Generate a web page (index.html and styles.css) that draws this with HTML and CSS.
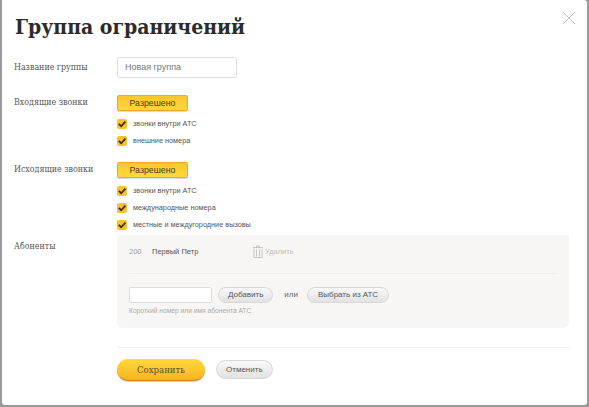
FILE: index.html
```html
<!DOCTYPE html>
<html lang="ru">
<head>
<meta charset="utf-8">
<title>Группа ограничений</title>
<link rel="stylesheet" href="styles.css">
</head>
<body>
<div class="modal">
  <svg class="close" width="14" height="14" viewBox="0 0 14 14"><path d="M1 1L13 13M13 1L1 13" stroke="#c4c4c4" stroke-width="1" fill="none"/></svg>
  <h1 class="title">Группа ограничений</h1>
  <div class="row name-row">
    <div class="label">Название группы</div>
    <div class="control"><input class="name-input" type="text" value="Новая группа"></div>
  </div>
  <div class="row calls-row">
    <div class="label">Входящие звонки</div>
    <div class="control">
      <div class="toggle">Разрешено</div>
      <div class="checks">
        <div class="check"><svg class="box" width="10" height="10" viewBox="0 0 10 10"><path d="M1.8 4.8L4.2 7.2L8.4 2.6" stroke="#3a2a08" stroke-width="1.7" fill="none"/></svg>звонки внутри АТС</div>
        <div class="check"><svg class="box" width="10" height="10" viewBox="0 0 10 10"><path d="M1.8 4.8L4.2 7.2L8.4 2.6" stroke="#3a2a08" stroke-width="1.7" fill="none"/></svg>внешние номера</div>
      </div>
    </div>
  </div>
  <div class="row calls-row out-row">
    <div class="label">Исходящие звонки</div>
    <div class="control">
      <div class="toggle">Разрешено</div>
      <div class="checks">
        <div class="check"><svg class="box" width="10" height="10" viewBox="0 0 10 10"><path d="M1.8 4.8L4.2 7.2L8.4 2.6" stroke="#3a2a08" stroke-width="1.7" fill="none"/></svg>звонки внутри АТС</div>
        <div class="check"><svg class="box" width="10" height="10" viewBox="0 0 10 10"><path d="M1.8 4.8L4.2 7.2L8.4 2.6" stroke="#3a2a08" stroke-width="1.7" fill="none"/></svg>международные номера</div>
        <div class="check"><svg class="box" width="10" height="10" viewBox="0 0 10 10"><path d="M1.8 4.8L4.2 7.2L8.4 2.6" stroke="#3a2a08" stroke-width="1.7" fill="none"/></svg>местные и междугородние вызовы</div>
      </div>
    </div>
  </div>
  <div class="row subs-row">
    <div class="label subs-label">Абоненты</div>
    <div class="panel">
      <div class="sub">
        <span class="sub-num">200</span>
        <span class="sub-name">Первый Петр</span>
        <span class="sub-del">
          <svg width="10" height="13" viewBox="0 0 10 13"><path d="M0 2.5H10M3.5 2.5V1H6.5V2.5M1 3.5V12.5H9V3.5M3.5 4.5V11.5M6.5 4.5V11.5" stroke="#c6c5c2" stroke-width="1" fill="none"/></svg>
          Удалить
        </span>
      </div>
      <div class="add">
        <input class="add-input" type="text">
        <div class="pill">Добавить</div>
        <span class="or">или</span>
        <div class="pill pill-wide">Выбрать из АТС</div>
      </div>
      <div class="hint">Короткий номер или имя абонента АТС</div>
    </div>
  </div>
  <div class="footer">
    <div class="save">Сохранить</div>
    <div class="pill cancel">Отменить</div>
  </div>
</div>
</body>
</html>
```
FILE: styles.css
```css
* { box-sizing: border-box; }
html, body { margin: 0; height: 100%; }
body { background: #9a9a9a; padding: 0 2px 2px 2px; overflow: hidden; font-family: "Liberation Sans", sans-serif; }
.modal { position: relative; background: #fff; height: 405px; border-radius: 0 3px 3px 3px; padding: 13px 18px 0 12px; color: #333; }
.close { position: absolute; top: 11px; right: 11px; }
.title { margin: 0; padding-left: 1px; font: bold 21px/28px "DejaVu Serif Condensed", "DejaVu Serif", serif; color: #2b2b2b; height: 28px; }
.row { display: grid; grid-template-columns: 103px 1fr; }
.label { font: 8.8px/14px "DejaVu Serif Condensed", "DejaVu Serif", serif; color: #555; }
.name-row { margin-top: 15px; align-items: center; }
.name-input { width: 120px; height: 21px; border: 1px solid #ddd; border-radius: 3px; padding: 0 7px; font: 9px "Liberation Sans", sans-serif; color: #777; background: #fff; outline: none; }
.calls-row { margin-top: 17px; }
.out-row { margin-top: 15px; }
.toggle { width: 71px; height: 16px; border: 1px solid #eaa92a; border-radius: 2px; background: linear-gradient(#fbc531, #ffd83a); font-size: 8.8px; line-height: 14px; text-align: center; color: #4a4020; box-shadow: 0 1px 1px rgba(0,0,0,.15); }
.checks { margin-top: 7px; display: flex; flex-direction: column; gap: 5px; }
.check { display: flex; align-items: center; height: 12px; font-size: 7.3px; color: #555; white-space: nowrap; }
.box { width: 10px; height: 10px; margin-right: 6px; background: #f8c22f; border-radius: 2px; border: 0; }
.subs-row { margin-top: 4px; }
.subs-label { padding-top: 4px; }
.panel { width: 452px; height: 93px; background: #f8f6f4; border-radius: 0 0 6px 6px; padding: 10px 12px 0; }
.sub { display: flex; align-items: center; height: 13px; font-size: 7.5px; }
.sub-num { color: #999; width: 23px; }
.sub-name { color: #555; width: 101px; }
.sub-del { display: flex; align-items: center; gap: 2px; color: #bbb; }
.add { display: flex; align-items: center; margin-top: 15px; border-top: 1px solid #efedeb; padding-top: 13px; }
.add-input { width: 83px; height: 16px; border: 1px solid #ddd; border-radius: 2px; background: #fff; outline: none; margin-right: 6px; }
.pill { height: 16px; border-radius: 8px; border: 1px solid #d8d8d8; background: linear-gradient(#f9f9f9, #e2e2e2); font-size: 8px; line-height: 14px; color: #555; padding: 0 9px; white-space: nowrap; }
.pill-wide { padding: 0 10px; }
.or { font-size: 8px; color: #666; margin: 0 9px 0 11px; }
.hint { margin-top: 3px; font-size: 6.7px; line-height: 9px; color: #aaa; }
.footer { display: flex; align-items: center; margin: 19px 0 0 103px; padding-top: 11px; width: 452px; border-top: 1px solid #eee; }
.save { width: 88px; height: 22px; border-radius: 11px; background: linear-gradient(#ffd83b, #f9b41f); border-bottom: 1px solid #c98a1c; box-shadow: 0 1px 1px rgba(0,0,0,.2); font: 9.5px/21px "DejaVu Serif Condensed", "DejaVu Serif", serif; text-align: center; color: #5c5020; }
.cancel { margin-left: 11px; height: 19px; border-radius: 10px; line-height: 17px; padding: 0 9px; }
```
